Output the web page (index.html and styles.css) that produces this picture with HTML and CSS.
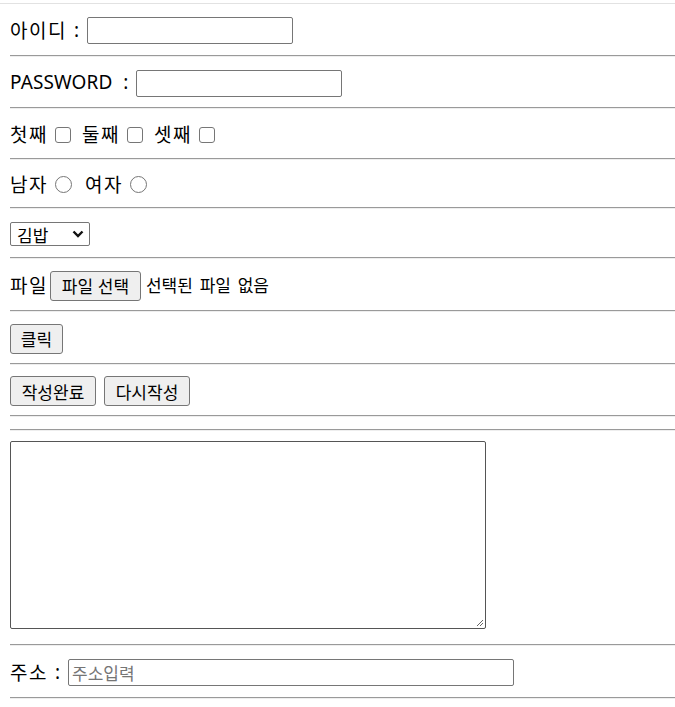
FILE: index.html
```html
<!DOCTYPE html>
<html lang="ko">
<head>
<meta charset="utf-8">
<title>form</title>
<link rel="stylesheet" href="styles.css">
</head>
<body>
<div class="topline"></div>
<div class="page">
  <div class="row r1"><span class="label">아이디</span><span class="colon">:</span><input class="text" type="text"></div>
  <hr>
  <div class="row r2"><span class="label latin">PASSWORD</span><span class="colon">:</span><input class="text" type="password"></div>
  <hr>
  <div class="row r3">
    <span class="label">첫째</span><span class="box"></span>
    <span class="label">둘째</span><span class="box"></span>
    <span class="label">셋째</span><span class="box"></span>
  </div>
  <hr>
  <div class="row r4">
    <span class="label">남자</span><span class="radio"></span>
    <span class="label">여자</span><span class="radio"></span>
  </div>
  <hr>
  <div class="row r5"><div class="select"><span>김밥</span><svg class="chev" viewBox="0 0 12 8" width="12" height="8"><path d="M1.5 1.5 L6 6 L10.5 1.5" fill="none" stroke="#111" stroke-width="2.4"/></svg></div></div>
  <hr>
  <div class="row r6"><span class="label">파일</span><span class="btn filebtn">파일 선택</span><span class="small">선택된 파일 없음</span></div>
  <hr>
  <div class="row r7"><span class="btn b-click">클릭</span></div>
  <hr>
  <div class="row r8"><span class="btn b-wide">작성완료</span><span class="btn b-wide b2">다시작성</span></div>
  <hr>
  <div class="row r9"></div>
  <hr>
  <div class="row r10"><div class="area"><svg class="grip" viewBox="0 0 8 8" width="8" height="8"><path d="M7 1 L1 7 M7 4 L4 7" stroke="#666" stroke-width="1"/></svg></div></div>
  <hr>
  <div class="row r11"><span class="label">주소</span><span class="colon">:</span><div class="addr">주소입력</div></div>
  <hr>
</div>
</body>
</html>
```
FILE: styles.css
```css
html, body { margin: 0; padding: 0; background: #fff; }
body {
  font-family: "Noto Sans CJK KR", "Noto Sans", sans-serif;
  color: #000;
  overflow: hidden;
}
.topline { height: 1px; background: #e2e2e2; margin-top: 3px; }
.page { padding-left: 10px; }
hr {
  margin: 0;
  height: 0;
  border: 0;
  border-top: 1px solid #9a9a9a;
  border-bottom: 1px solid #eeeeee;
}
.row { display: flex; align-items: center; }
.label { font-size: 19px; line-height: 24px; letter-spacing: 1.5px; }
.latin { font-family: "Noto Sans", sans-serif; letter-spacing: 0.1px; }
.colon {
  font-family: "Noto Sans", sans-serif;
  font-size: 19px; line-height: 24px;
  margin: 0 8px 0 7px;
}
.r2 .colon { margin-left: 11px; }
.r1 { height: 51px; }
.r2 { height: 50px; }
.r3 { height: 49px; }
.r4 { height: 47px; }
.r5 { height: 48px; }
.r6 { height: 51px; }
.r7 { height: 51px; }
.r8 { height: 50px; }
.r9 { height: 12px; }
.r10 { height: 213px; align-items: flex-start; }
.r11 { height: 51px; }
.text {
  box-sizing: border-box;
  width: 206px; height: 27px;
  border: 1px solid #767676; border-radius: 2px;
  margin: 2px 0 0 0; padding: 0;
  background: #fff;
}
.box {
  box-sizing: border-box;
  width: 16px; height: 16px;
  border: 1px solid #767676; border-radius: 3px;
  margin: 2px 11px 0 7px;
}
.radio {
  box-sizing: border-box;
  width: 17px; height: 17px;
  border: 1px solid #767676; border-radius: 50%;
  margin: 1px 13px 0 7px;
}
.select {
  box-sizing: border-box;
  width: 80px; height: 24px;
  border: 1px solid #767676; border-radius: 2px;
  display: flex; align-items: center; justify-content: space-between;
  padding: 0 5px 0 6px;
  font-size: 17px;
  margin-top: 2px;
}
.chev { display: block; }
.btn {
  box-sizing: border-box;
  display: inline-flex; align-items: center; justify-content: center;
  background: #efefef;
  border: 1px solid #767676; border-radius: 3px;
  font-size: 17px;
  height: 30px;
}
.filebtn { width: 91px; margin-left: 2px; margin-top: 2px; }
.small { font-size: 17px; margin-left: 5px; word-spacing: 2px; }
.b-click { width: 53px; margin-top: 2px; }
.b-wide { width: 86px; margin-top: 2px; }
.b2 { margin-left: 8px; }
.area {
  box-sizing: border-box;
  position: relative;
  width: 476px; height: 188px;
  margin-top: 10px;
  border: 1px solid #555; border-radius: 2px;
}
.grip { position: absolute; right: 1px; bottom: 1px; }
.addr {
  box-sizing: border-box;
  width: 446px; height: 27px;
  border: 1px solid #767676; border-radius: 2px;
  margin-top: 2px;
  font-size: 17px; color: #757575;
  padding-left: 3px;
  display: flex; align-items: center;
}
```
